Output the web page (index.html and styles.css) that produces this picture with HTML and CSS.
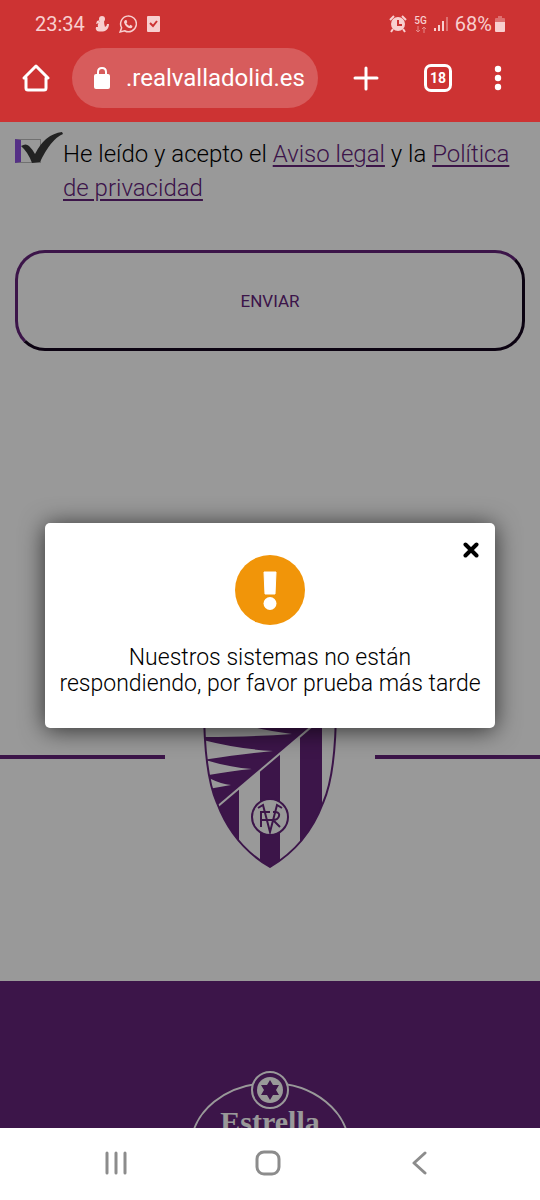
FILE: index.html
```html
<!DOCTYPE html>
<html lang="es">
<head>
    <meta charset="UTF-8">
    <meta name="viewport" content="width=device-width, initial-scale=1.0">
    <title>Real Valladolid</title>
    <link rel="stylesheet" href="styles.css">
</head>
<body>
    <header class="browser">
        <!-- Barra de estado -->
        <div class="status-bar">
            <div class="status-group">
                <span>23:34</span>
                <svg class="status-icon" width="14" height="16" viewBox="0 0 14 16">
                    <circle cx="7" cy="3" r="3"/>
                    <path d="M5 5 L9 5 Q9 8 10 11 Q12 10 12 8 L14 8 Q14 13 10 15 Q6 16 2 15 Q0 13 1 11 L3 11 Q2 8 5 5Z"/>
                    <path d="M2 5 L5 4 L4 7 L1 8Z"/>
                </svg>
                <svg class="status-icon" width="18" height="18" viewBox="0 0 24 24">
                    <path d="M3.5 17 A10.5 10.5 0 1 1 7.5 21 L1.5 22.5Z" fill="none" stroke="#f8cfcf" stroke-width="2"/>
                    <path d="M8.5 6.5 L10 6.5 L11 9.5 L9.8 11 Q11 13.5 13.8 14.6 L15.2 13.1 L18 14.5 Q18 17.5 15 17.7 Q9 17 6.7 10 Q6.5 7.7 8.5 6.5Z"/>
                </svg>
                <svg class="status-icon" width="13" height="16" viewBox="0 0 13 16">
                    <rect width="13" height="16" rx="1"/>
                    <path d="M3 7 L6 10 L10 5" fill="none" stroke="#cd3333" stroke-width="2"/>
                </svg>
            </div>
            <div class="status-group status-right">
                <svg class="status-icon" width="18" height="18" viewBox="0 0 18 18">
                    <circle cx="9" cy="9" r="7"/>
                    <path d="M9 5 V10 H13" fill="none" stroke="#cd3333" stroke-width="2"/>
                    <path d="M1 5 L5 1 M17 5 L13 1 M4 14 L2 17 M14 14 L16 17" stroke="#f8cfcf" stroke-width="2"/>
                </svg>
                <span class="network">5G<svg width="12" height="7" viewBox="0 0 12 7"><path d="M3 0 V6 M1 4 L3 6 L5 4 M9 7 V1 M7 3 L9 1 L11 3" fill="none" stroke="#e58b8b" stroke-width="1"/></svg></span>
                <svg class="status-icon" width="14" height="16" viewBox="0 0 14 16">
                    <path d="M0 12 h2 v3 h-2Z M4 9 h2 v6 h-2Z M8 5 h2 v10 h-2Z"/>
                    <path d="M12 1 h2 v14 h-2Z" opacity=".4"/>
                </svg>
                <span class="battery">68%<svg class="status-icon" width="10" height="16" viewBox="0 0 10 16">
                    <path d="M3 0 H7 V2 H9 Q10 2 10 3 V6 H0 V3 Q0 2 1 2 H3Z" opacity=".4"/>
                    <path d="M0 6 H10 V15 Q10 16 9 16 H1 Q0 16 0 15Z"/>
                </svg></span>
            </div>
        </div>

        <!-- Barra de direcciones -->
        <div class="toolbar">
            <button class="tool-button" type="button" aria-label="Inicio">
                <svg width="28" height="28" viewBox="0 0 28 28" fill="none" stroke="#fff" stroke-width="3" stroke-linejoin="round">
                    <path d="M2 14 L14 2 L26 14 H24 V24 Q24 26 22 26 H6 Q4 26 4 24 V14Z"/>
                </svg>
            </button>
            <button class="address" type="button">
                <svg width="16" height="22" viewBox="0 0 16 22">
                    <rect y="7" width="16" height="15" rx="2" fill="#fff"/>
                    <path d="M4 8 V5 Q4 1 8 1 Q12 1 12 5 V8" fill="none" stroke="#fff" stroke-width="2"/>
                </svg>
                <span>.realvalladolid.es</span>
            </button>
            <button class="tool-button" type="button" aria-label="Nueva pestaña">
                <svg width="26" height="26" viewBox="0 0 26 26" stroke="#fff" stroke-width="3" stroke-linecap="round">
                    <path d="M13 3 V24 M2 13 H24"/>
                </svg>
            </button>
            <button class="tool-button" type="button" aria-label="Pestañas"><span class="tabs">18</span></button>
            <button class="tool-button" type="button" aria-label="Menú">
                <svg width="8" height="26" viewBox="0 0 8 26" fill="#fff">
                    <circle cx="4" cy="4" r="3.2"/>
                    <circle cx="4" cy="13" r="3.2"/>
                    <circle cx="4" cy="22" r="3.2"/>
                </svg>
            </button>
        </div>
    </header>

    <main class="page">
        <form class="contact-form">
            <div class="accept">
                <span class="check">
                    <input type="checkbox" id="accept" checked>
                    <svg class="check-mark" width="48" height="34" viewBox="0 0 48 34">
                        <path d="M6 14 Q11 11 14 14 Q18 18 20 22 Q30 2 47 0 L48 2 Q36 7 25 30 L17 31 Q13 20 6 14Z" fill="#3a3a3a"/>
                    </svg>
                </span>
                <label for="accept">He leído y acepto el <a href="#">Aviso legal</a> y la <a href="#">Política de privacidad</a></label>
            </div>
            <button class="send" type="button">ENVIAR</button>
        </form>

        <div class="crest-row">
            <svg width="134" height="223" viewBox="0 0 134 223">
                <defs>
                    <clipPath id="shield">
                        <path d="M1 1 H133 V60 C133 102 129 138 120 158 C111 182 96 205 67 222 C38 205 23 182 14 158 C5 138 1 102 1 60Z"/>
                    </clipPath>
                </defs>
                <g clip-path="url(#shield)" fill="#64237b">
                    <!-- rayas -->
                    <path d="M0 174 L36 143 V223 H0Z M57 125 L77 108 V223 H57Z M97 91 L119 72 V223 H97Z"/>
                    <!-- alas -->
                    <path d="M0 0 H134 V60 L16 160 H0Z"/>
                    <g fill="#fff">
                        <path d="M0 74 L38 79 Q60 85 89 89 Q50 92 0 92Z"/>
                        <path d="M0 95 Q35 104 70 106 Q40 109 0 115Z"/>
                        <path d="M0 115 L6 116 Q25 122 49 124 Q28 126 0 131Z"/>
                        <path d="M0 132 L8 134 Q18 139 28 140 L0 145Z"/>
                    </g>
                    <path d="M14 162 L134 60" stroke="#fff" stroke-width="2"/>
                </g>
                <path d="M1 1 H133 V60 C133 102 129 138 120 158 C111 182 96 205 67 222 C38 205 23 182 14 158 C5 138 1 102 1 60Z" fill="none" stroke="#64237b" stroke-width="2"/>
                <circle cx="67" cy="172" r="18" fill="#fff" stroke="#64237b" stroke-width="2"/>
                <path d="M55 163 L60 160 L67 187 L74 160 L79 163 M58 182 V167 H67 M58 175 H70 M70 167 H73 Q77 168 76 171 Q75 175 70 175 L77 182" fill="none" stroke="#64237b" stroke-width="2"/>
            </svg>
        </div>

        <footer class="sponsors">
            <svg width="164" height="80" viewBox="0 0 164 80">
                <ellipse cx="82" cy="76" rx="79" ry="64" fill="none" stroke="#fff" stroke-width="2"/>
                <circle cx="82" cy="19" r="18" fill="#64237b" stroke="#fff" stroke-width="2"/>
                <circle cx="82" cy="19" r="13" fill="#fff"/>
                <path d="M82 9 L85 14 H91 L88 19 L91 24 H85 L82 29 L79 24 H73 L76 19 L73 14 H79Z" fill="#64237b"/>
                <text x="82" y="61" class="sponsor-name">Estrella</text>
            </svg>
        </footer>

        <!-- Aviso de error -->
        <div class="overlay">
            <div class="modal" role="alertdialog" aria-labelledby="modalText">
                <button class="close" type="button" aria-label="Cerrar">
                    <svg width="16" height="16" viewBox="0 0 16 16" stroke="#000" stroke-width="4" stroke-linecap="round">
                        <path d="M2.5 2.5 L13.5 13.5 M13.5 2.5 L2.5 13.5"/>
                    </svg>
                </button>
                <svg width="70" height="70" viewBox="0 0 70 70">
                    <circle cx="35" cy="35" r="35" fill="#f19509"/>
                    <path d="M29 17 H41 L40 39 H30Z" fill="#fff" stroke="#fff" stroke-width="1" stroke-linejoin="round"/>
                    <circle cx="35" cy="48.5" r="6.5" fill="#fff"/>
                </svg>
                <p id="modalText">Nuestros sistemas no están respondiendo, por favor prueba más tarde</p>
            </div>
        </div>
    </main>

    <nav class="phone-nav">
        <button type="button" aria-label="Recientes">
            <svg width="24" height="24" viewBox="0 0 24 24"><path d="M3 2 V22 M12 2 V22 M21 2 V22"/></svg>
        </button>
        <button type="button" aria-label="Inicio">
            <svg width="26" height="26" viewBox="0 0 26 26"><rect x="2" y="2" width="22" height="22" rx="7"/></svg>
        </button>
        <button type="button" aria-label="Atrás">
            <svg width="24" height="24" viewBox="0 0 24 24"><path d="M17 2 L6 12 L17 22"/></svg>
        </button>
    </nav>
</body>
</html>
```
FILE: styles.css
```css
* {
    box-sizing: border-box;
}

body {
    font-family: Roboto, sans-serif;
    margin: 0;
    height: 100vh;
    display: flex;
    flex-direction: column;
    background-color: white;
    color: black;
}

button {
    font-family: inherit;
    background: none;
    border: none;
    padding: 0;
    cursor: pointer;
}

svg {
    display: block;
    flex-shrink: 0;
}

/* Navegador */
.browser {
    background-color: #cd3333;
    color: white;
    padding-bottom: 14px;
}

.status-bar {
    display: flex;
    justify-content: space-between;
    align-items: center;
    height: 48px;
    padding: 0 35px;
    font-size: 20px;
    color: #f8cfcf;
}

.status-group {
    display: flex;
    align-items: center;
    gap: 10px;
}

.status-right {
    gap: 7px;
}

.status-icon {
    fill: #f8cfcf;
}

.network {
    display: flex;
    flex-direction: column;
    align-items: center;
    font-size: 10px;
    line-height: 10px;
    font-weight: 500;
}

.battery {
    display: flex;
    align-items: center;
    gap: 3px;
}

.toolbar {
    display: flex;
    align-items: center;
}

.tool-button {
    display: flex;
    align-items: center;
    justify-content: center;
    width: 72px;
    height: 60px;
}

.tool-button:last-child {
    width: 48px;
    margin-right: 18px;
}

.address {
    flex: 1;
    display: flex;
    align-items: center;
    gap: 16px;
    height: 60px;
    padding: 0 12px 0 22px;
    margin-right: 12px;
    border-radius: 30px;
    background-color: #d75c5c;
    color: white;
    font-size: 24px;
}

.tabs {
    width: 28px;
    height: 28px;
    border: 3px solid white;
    border-radius: 7px;
    color: white;
    font-size: 14px;
    line-height: 22px;
    font-weight: 700;
}

/* Contenido de la web */
.page {
    position: relative;
    flex: 1;
    min-height: 0;
    overflow: hidden;
    display: flex;
    flex-direction: column;
}

.contact-form {
    padding: 15px;
}

.accept {
    display: flex;
    font-size: 24px;
    line-height: 34px;
    font-weight: 300;
}

.accept a {
    color: #64237b;
    text-underline-offset: 3px;
    text-decoration-thickness: 2px;
}

.check {
    position: relative;
    width: 48px;
    flex-shrink: 0;
}

.check input {
    appearance: none;
    display: block;
    margin: 2px 0;
    width: 26px;
    height: 24px;
    border: 1px solid #bbb;
    border-left: 6px solid #8e50e0;
}

.check-mark {
    position: absolute;
    left: 0;
    top: -5px;
    pointer-events: none;
}

.send {
    display: block;
    width: 100%;
    height: 101px;
    margin-top: 45px;
    border: 3px solid #64237b;
    border-right-color: #15051e;
    border-bottom-color: #15051e;
    border-radius: 30px;
    color: #64237b;
    font-size: 17px;
}

.crest-row {
    display: flex;
    align-items: center;
    gap: 38px;
    margin: 279px 0 113px;
}

.crest-row::before,
.crest-row::after {
    content: "";
    flex: 1;
    height: 4px;
    background-color: #64237b;
}

.sponsors {
    flex: 1;
    min-height: 0;
    display: flex;
    justify-content: center;
    padding-top: 90px;
    background-color: #64237b;
}

.sponsor-name {
    font-family: "Liberation Serif", serif;
    font-size: 30px;
    font-weight: 700;
    fill: white;
    text-anchor: middle;
}

/* Aviso */
.overlay {
    position: absolute;
    inset: 0;
    display: flex;
    align-items: center;
    justify-content: center;
    padding: 0 45px;
    background-color: rgba(0, 0, 0, 0.4);
}

.modal {
    position: relative;
    width: 100%;
    display: flex;
    flex-direction: column;
    align-items: center;
    padding: 32px 12px 31px;
    border-radius: 5px;
    background-color: white;
    box-shadow: 0 2px 24px rgba(0, 0, 0, 0.7);
}

.modal p {
    margin: 20px 0 0;
    font-size: 23px;
    line-height: 26px;
    font-weight: 300;
    text-align: center;
}

.close {
    position: absolute;
    top: 19px;
    right: 16px;
}

/* Botones del teléfono */
.phone-nav {
    display: flex;
    align-items: center;
    justify-content: space-between;
    height: 72px;
    padding: 0 108px 2px 104px;
    background-color: white;
}

.phone-nav svg {
    fill: none;
    stroke: #8c8c8c;
    stroke-width: 3;
    stroke-linecap: round;
    stroke-linejoin: round;
}
```
